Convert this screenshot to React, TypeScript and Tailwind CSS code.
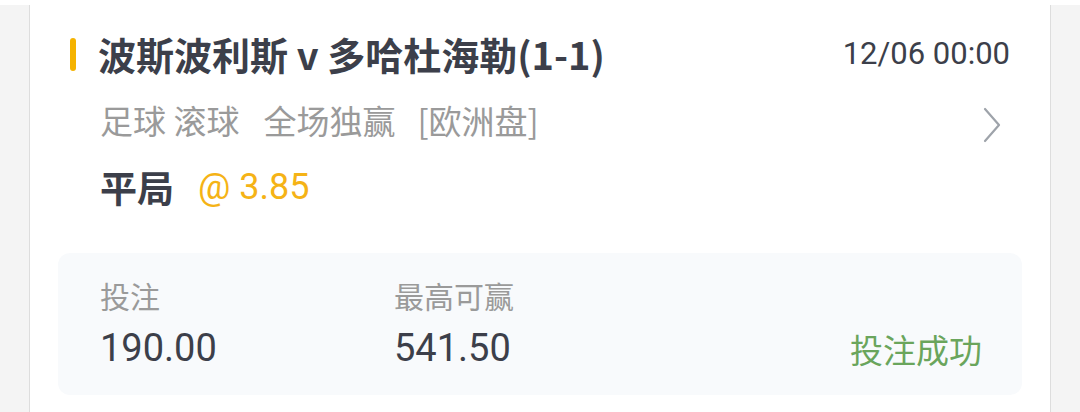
const CJK = "font-['Noto_Sans_CJK_SC',sans-serif]"
const NUM = "font-['Roboto','Noto_Sans_CJK_SC',sans-serif]"

function Chevron() {
  return (
    <svg width="20" height="36" viewBox="0 0 20 36" fill="none" className="mt-[10px] text-[#9ea3aa]">
      <path d="M3 2 L17 18 L3 34" stroke="currentColor" strokeWidth="2.2" strokeLinecap="round" strokeLinejoin="round" />
    </svg>
  )
}

interface StatProps {
  label: string
  value: string
}

function Stat({ label, value }: StatProps) {
  return (
    <div className="flex flex-col">
      <span className={`${CJK} text-[30px] leading-[40px] text-[#9a9a9a]`}>{label}</span>
      <span className={`${NUM} mt-[13px] text-[38px] leading-[40px] text-[#3c3f4a]`}>{value}</span>
    </div>
  )
}

export default function App() {
  return (
    <div className="h-[412px] w-[1080px] overflow-hidden bg-white">
      <div className="h-[5px]" />
      <div className="flex h-full bg-[#f4f4f4] px-[29px]">
        <div className="flex-1 border-x border-[#dddddd] bg-white px-[28px] pt-[25px]">
          {/* match title + time */}
          <div className="flex h-[48px] items-center">
            <span className="ml-[12px] h-[33px] w-[6px] rounded-full bg-[#f5b300]" />
            <h1 className={`${CJK} ml-[22px] flex-1 text-[38px] font-bold leading-[48px] text-[#3c3f4a]`}>
              波斯波利斯 v 多哈杜海勒(1-1)
            </h1>
            <span className={`${NUM} mr-[12px] text-[31px] text-[#3c3f4a]`}>12/06 00:00</span>
          </div>

          {/* market */}
          <div className="mt-[22px] flex h-[40px] items-center pl-[42px] pr-[20px]">
            <div className={`${CJK} flex flex-1 items-center text-[33px] leading-[40px] text-[#9a9a9a]`}>
              <span>足球 滚球</span>
              <span className="ml-[24px]">全场独赢</span>
              <span className="ml-[22px]">[欧洲盘]</span>
            </div>
            <Chevron />
          </div>

          {/* selection */}
          <div className="mt-[27px] flex h-[40px] items-center pl-[42px]">
            <span className={`${CJK} text-[37px] font-bold leading-[40px] text-[#3c3f4a]`}>平局</span>
            <span className={`${NUM} ml-[24px] text-[36px] leading-[40px] text-[#f5b316]`}>@ 3.85</span>
          </div>

          {/* stake panel */}
          <div className="mt-[46px] flex h-[142px] items-start rounded-[12px] bg-[#f8fafc] pl-[42px] pr-[40px] pt-[22px]">
            <div className="w-[294px]">
              <Stat label="投注" value="190.00" />
            </div>
            <div className="flex-1">
              <Stat label="最高可赢" value="541.50" />
            </div>
            <span className={`${CJK} mt-[54px] text-[33px] leading-[40px] text-[#6aa55c]`}>投注成功</span>
          </div>
        </div>
      </div>
    </div>
  )
}
